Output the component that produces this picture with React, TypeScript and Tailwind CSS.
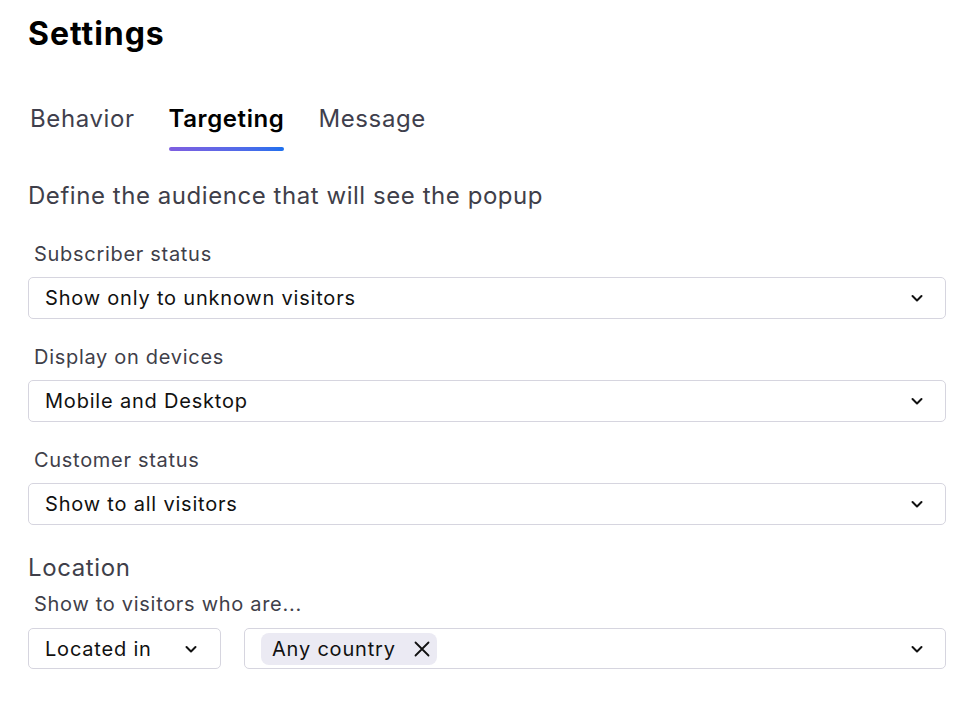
import React from "react";

function Chevron() {
  return (
    <svg width="14" height="14" viewBox="0 0 14 14" fill="none" className="shrink-0">
      <path d="M2.5 5l4.5 4.5L11.5 5" stroke="#111" strokeWidth="2" strokeLinecap="round" strokeLinejoin="round" />
    </svg>
  );
}

function Select({ value }: { value: string }) {
  return (
    <div className="flex h-[42px] items-center justify-between rounded-[5px] border border-[#d6d5df] bg-white pl-4 pr-[21px]">
      <span className="text-[20px] tracking-[0.04em] text-[#111]">{value}</span>
      <Chevron />
    </div>
  );
}

function Field({ label, value }: { label: string; value: string }) {
  return (
    <div className="flex flex-col">
      <div className="mb-[9px] pl-[6px] text-[20px] leading-7 tracking-[0.035em] text-[#3f3f4a]">{label}</div>
      <Select value={value} />
    </div>
  );
}

export default function App() {
  const tabs = ["Behavior", "Targeting", "Message"];
  return (
    <div className="min-h-[710px] bg-white pl-7 pr-[14px] pt-[14px] font-['Inter',sans-serif] antialiased">
      <h1 className="text-[32px] font-bold leading-10 tracking-[0.03em] text-black">Settings</h1>

      <div className="mt-[49px] flex gap-[34px] pl-[2px]">
        {tabs.map((t) => (
          <div key={t} className="flex flex-col">
            <span
              className={
                t === "Targeting"
                  ? "text-[24px] font-semibold leading-8 tracking-[0.025em] text-black"
                  : "text-[24px] leading-8 tracking-[0.025em] text-[#3f3f4d]"
              }
            >
              {t}
            </span>
            <div
              className={
                t === "Targeting"
                  ? "mt-3 h-1 rounded-full bg-gradient-to-r from-[#7e5ee0] to-[#1b70ee]"
                  : "mt-3 h-1"
              }
            />
          </div>
        ))}
      </div>

      <p className="mt-[31px] text-[24px] leading-7 tracking-[0.023em] text-[#3f3f4a]">
        Define the audience that will see the popup
      </p>

      <div className="mt-[30px] flex flex-col gap-6">
        <Field label="Subscriber status" value="Show only to unknown visitors" />
        <Field label="Display on devices" value="Mobile and Desktop" />
        <Field label="Customer status" value="Show to all visitors" />
      </div>

      <div className="mt-[27px] text-[24px] leading-8 tracking-[0.025em] text-[#3f3f4a]">Location</div>
      <div className="mt-[6px] pl-[6px] text-[20px] leading-7 tracking-[0.035em] text-[#3f3f4a]">
        Show to visitors who are...
      </div>

      <div className="mt-[10px] flex gap-[23px]">
        <div className="flex h-[41px] w-[193px] items-center justify-between rounded-[5px] border border-[#d6d5df] pl-4 pr-[22px]">
          <span className="text-[20px] tracking-[0.04em] text-[#111]">Located in</span>
          <Chevron />
        </div>
        <div className="flex h-[41px] flex-1 items-center justify-between rounded-[5px] border border-[#d6d5df] pl-4 pr-[21px]">
          <div className="flex h-8 items-center gap-[17px] rounded-lg bg-[#ebeaf3] pl-[11px] pr-[6px]">
            <span className="text-[20px] tracking-[0.04em] text-[#111]">Any country</span>
            <svg width="18" height="18" viewBox="0 0 18 18" fill="none">
              <path d="M2.5 2.5l13 13M15.5 2.5l-13 13" stroke="#111" strokeWidth="1.8" strokeLinecap="round" />
            </svg>
          </div>
          <Chevron />
        </div>
      </div>
    </div>
  );
}
